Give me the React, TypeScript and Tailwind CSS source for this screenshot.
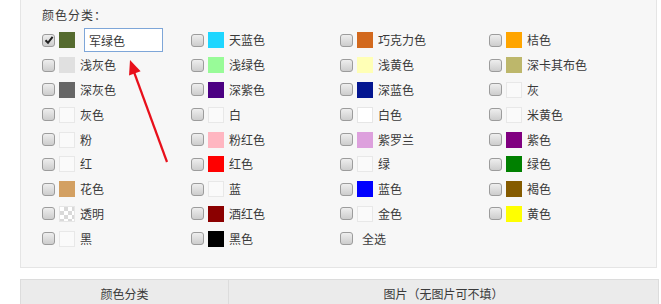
import React from 'react';

type Item = { name: string; color?: string; checked?: boolean; edit?: boolean; pattern?: boolean; none?: boolean };

// column-major order, 4 columns x 9 rows
const columns: Item[][] = [
    [
        { name: '军绿色', color: '#556B2F', checked: true, edit: true },
        { name: '浅灰色', color: '#E0E0E0' },
        { name: '深灰色', color: '#666666' },
        { name: '灰色' },
        { name: '粉' },
        { name: '红' },
        { name: '花色', color: '#D3A062' },
        { name: '透明', pattern: true },
        { name: '黑' },
    ],
    [
        { name: '天蓝色', color: '#1ED6FF' },
        { name: '浅绿色', color: '#98FB98' },
        { name: '深紫色', color: '#4B0082' },
        { name: '白' },
        { name: '粉红色', color: '#FFB6C1' },
        { name: '红色', color: '#FF0000' },
        { name: '蓝' },
        { name: '酒红色', color: '#8B0000' },
        { name: '黑色', color: '#000000' },
    ],
    [
        { name: '巧克力色', color: '#D2691E' },
        { name: '浅黄色', color: '#FFFFB6' },
        { name: '深蓝色', color: '#041690' },
        { name: '白色', color: '#FFFFFF' },
        { name: '紫罗兰', color: '#DDA0DD' },
        { name: '绿' },
        { name: '蓝色', color: '#0000FF' },
        { name: '金色' },
        { name: '全选', none: true },
    ],
    [
        { name: '桔色', color: '#FFA500' },
        { name: '深卡其布色', color: '#BDB76B' },
        { name: '灰' },
        { name: '米黄色' },
        { name: '紫色', color: '#800080' },
        { name: '绿色', color: '#008000' },
        { name: '褐色', color: '#855B00' },
        { name: '黄色', color: '#FFFF00' },
    ],
];

const CheckBox: React.FC<{ checked?: boolean }> = ({ checked }) => (
    <span className="relative w-[13px] h-[13px] shrink-0 rounded-[3px] border border-[#9c9c9c] bg-gradient-to-b from-[#eeeeee] to-[#cdcdcd] flex items-center justify-center">
        {checked && (
            <svg width="10" height="10" viewBox="0 0 10 10">
                <path d="M1.5 5.2 L4 7.8 L8.6 1.8" fill="none" stroke="#222" strokeWidth="2" />
            </svg>
        )}
    </span>
);

const Swatch: React.FC<{ item: Item }> = ({ item }) => {
    if (item.pattern) {
        return (
            <span className="w-[16px] h-[16px] shrink-0 border border-[#e6e6e6] bg-[conic-gradient(#d9d9d9_25%,#ffffff_0_50%,#d9d9d9_0_75%,#ffffff_0)] bg-[length:8px_8px]" />
        );
    }
    if (!item.color) {
        return <span className="w-[16px] h-[16px] shrink-0 border border-[#e8e8e8] bg-[#fafafa]" />;
    }
    return (
        <span
            className="w-[16px] h-[16px] shrink-0 border border-[#ececec]"
            style={{ backgroundColor: item.color, borderColor: item.color === '#FFFFFF' ? '#e6e6e6' : item.color }}
        />
    );
};

const App: React.FC = () => {
    return (
        <div className="relative w-[661px] h-[304px] overflow-hidden bg-white text-[#3a3a3a] text-[12px] font-['Noto_Sans_CJK_SC','Noto_Sans',sans-serif]">
            {/* Color panel */}
            <div className="ml-[20px] w-[637px] h-[268px] border border-t-0 border-[#e5e5e5] bg-[#f7f7f7] pl-[21px]">
                <div className="pt-[7px] leading-[16px] tracking-[1px]">颜色分类：</div>
                <div className="mt-[5px] flex">
                    {columns.map((col, ci) => (
                        <div key={ci} className="w-[149px] flex flex-col">
                            {col.map(item => (
                                <div key={item.name} className="h-[24.8px] flex items-center">
                                    <CheckBox checked={item.checked} />
                                    {item.none ? (
                                        <span className="ml-[9px] leading-none">{item.name}</span>
                                    ) : (
                                        <>
                                            <span className="ml-[4px]" />
                                            <Swatch item={item} />
                                            {item.edit ? (
                                                <input
                                                    readOnly
                                                    value={item.name}
                                                    className="ml-[9px] w-[79px] h-[24px] border border-[#7ea6d8] bg-white px-[4px] text-[12px] outline-none"
                                                />
                                            ) : (
                                                <span className="ml-[5px] leading-none">{item.name}</span>
                                            )}
                                        </>
                                    )}
                                </div>
                            ))}
                        </div>
                    ))}
                </div>
            </div>

            {/* Table header */}
            <div className="mt-[11px] ml-[20px] w-[639px] flex border border-[#dcdcdc] bg-[#ebebeb] h-[34px]">
                <div className="w-[208px] border-r border-[#dcdcdc] flex justify-center pt-[5px]">颜色分类</div>
                <div className="flex-1 flex justify-center pt-[5px]">图片（无图片可不填）</div>
            </div>

            {/* Red annotation arrow */}
            <svg className="absolute left-0 top-0 pointer-events-none" width="661" height="304">
                <line x1="167" y1="162" x2="134" y2="72" stroke="#e8101b" strokeWidth="2.2" />
                <polygon points="130,60 140.6,71.2 129,75.4" fill="#e8101b" />
            </svg>
        </div>
    );
};

export default App;
